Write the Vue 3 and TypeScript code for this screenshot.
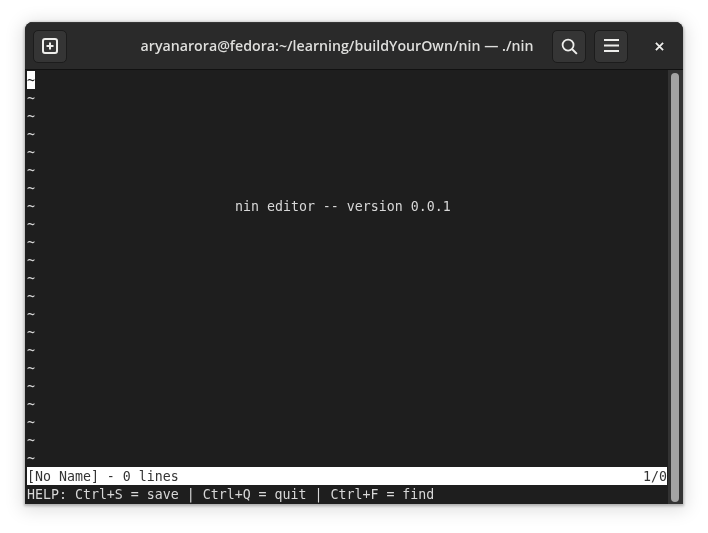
<script setup lang="ts">
const rows: number[] = Array.from({ length: 21 }, (_, i) => i)
</script>

<template>
  <div class="page">
    <div class="window">
      <header class="bar">
        <button class="btn" aria-label="New tab">
          <svg width="16" height="16" viewBox="0 0 16 16" fill="none" stroke="#eeeeec">
            <rect x="1" y="1" width="14" height="14" rx="2" stroke-width="2" />
            <path d="M8 4.5v7M4.5 8h7" stroke-width="2" />
          </svg>
        </button>
        <div class="title">aryanarora@fedora:~/learning/buildYourOwn/nin — ./nin</div>
        <button class="btn" aria-label="Search">
          <svg width="17" height="17" viewBox="0 0 18 18" fill="none" stroke="#eeeeec">
            <circle cx="7.5" cy="7.5" r="5.8" stroke-width="1.9" />
            <path d="M11.6 11.6 16.8 16.8" stroke-width="2.1" />
          </svg>
        </button>
        <button class="btn" aria-label="Menu">
          <svg width="15" height="14" viewBox="0 0 15 14" fill="#eeeeec">
            <rect x="0" y="0" width="15" height="2" />
            <rect x="0" y="5.5" width="15" height="2" />
            <rect x="0" y="11" width="15" height="2" />
          </svg>
        </button>
        <div class="close" aria-label="Close">
          <svg width="9" height="9" viewBox="0 0 10 10" fill="none" stroke="#eeeeec" stroke-width="2">
            <path d="M1 1l8 8M9 1l-8 8" />
          </svg>
        </div>
      </header>
      <div class="content">
        <main class="term">
          <div class="line"><span class="cursor">~</span></div>
          <div v-for="r in rows" :key="r" class="line">
            <span>~</span><span v-if="r === 6" class="welcome">nin editor -- version 0.0.1</span>
          </div>
          <div class="line status"><span>[No Name] - 0 lines</span><span>1/0</span></div>
          <div class="line">HELP: Ctrl+S = save | Ctrl+Q = quit | Ctrl+F = find</div>
        </main>
        <aside class="track"><div class="thumb"></div></aside>
      </div>
    </div>
  </div>
</template>

<style>
html, body { margin: 0; background: #ffffff; }
</style>

<style scoped>
.page {
  width: 708px;
  height: 533px;
  padding: 22px 25px 29px;
  box-sizing: border-box;
  background: #fff;
  overflow: hidden;
}
.window {
  height: 482px;
  display: flex;
  flex-direction: column;
  background: #1e1e1e;
  border-radius: 8px 8px 0 0;
  box-shadow: 0 3px 18px 3px rgba(0, 0, 0, 0.13), 0 1px 3px 1px rgba(0, 0, 0, 0.26);
  overflow: hidden;
  will-change: transform;
}
.bar {
  flex: none;
  display: flex;
  align-items: center;
  height: 46px;
  padding: 0 0 0 8px;
  background: #2a2a2a;
  border-bottom: 1px solid #111;
  border-top: 1px solid #363636;
}
.btn {
  width: 34px;
  height: 33px;
  padding: 0;
  display: flex;
  align-items: center;
  justify-content: center;
  background: #353535;
  border: 1px solid #1c1c1c;
  border-radius: 5px;
  box-sizing: border-box;
}
.btn + .btn { margin-left: 8px; }
.title {
  flex: 1;
  padding: 0 0 2px 55px;
  text-align: center;
  color: #dededc;
  font: 600 14.2px "Open Sans", sans-serif;
  white-space: nowrap;
}
.close {
  width: 47px;
  margin-left: 8px;
  display: flex;
  justify-content: center;
}
.content {
  flex: 1;
  display: flex;
  min-height: 0;
}
.term {
  flex: 1;
  padding: 1px 0 0 2px;
  color: #d8d8d8;
  font: 13.28px/20px "DejaVu Sans Mono", monospace;
}
.line {
  height: 18px;
  width: 640px;
  white-space: pre;
  display: flex;
}
.cursor {
  background: #fff;
  color: #1e1e1e;
  width: 8px;
}
.welcome { margin-left: 200px; }
.status {
  background: #fff;
  color: #333;
  justify-content: space-between;
}
.track {
  width: 15px;
  flex: none;
  background: #333;
  padding: 3px 4px 2px 3px;
  box-sizing: border-box;
}
.thumb {
  width: 8px;
  height: 100%;
  border-radius: 4px;
  background: #a4a4a4;
}
</style>
